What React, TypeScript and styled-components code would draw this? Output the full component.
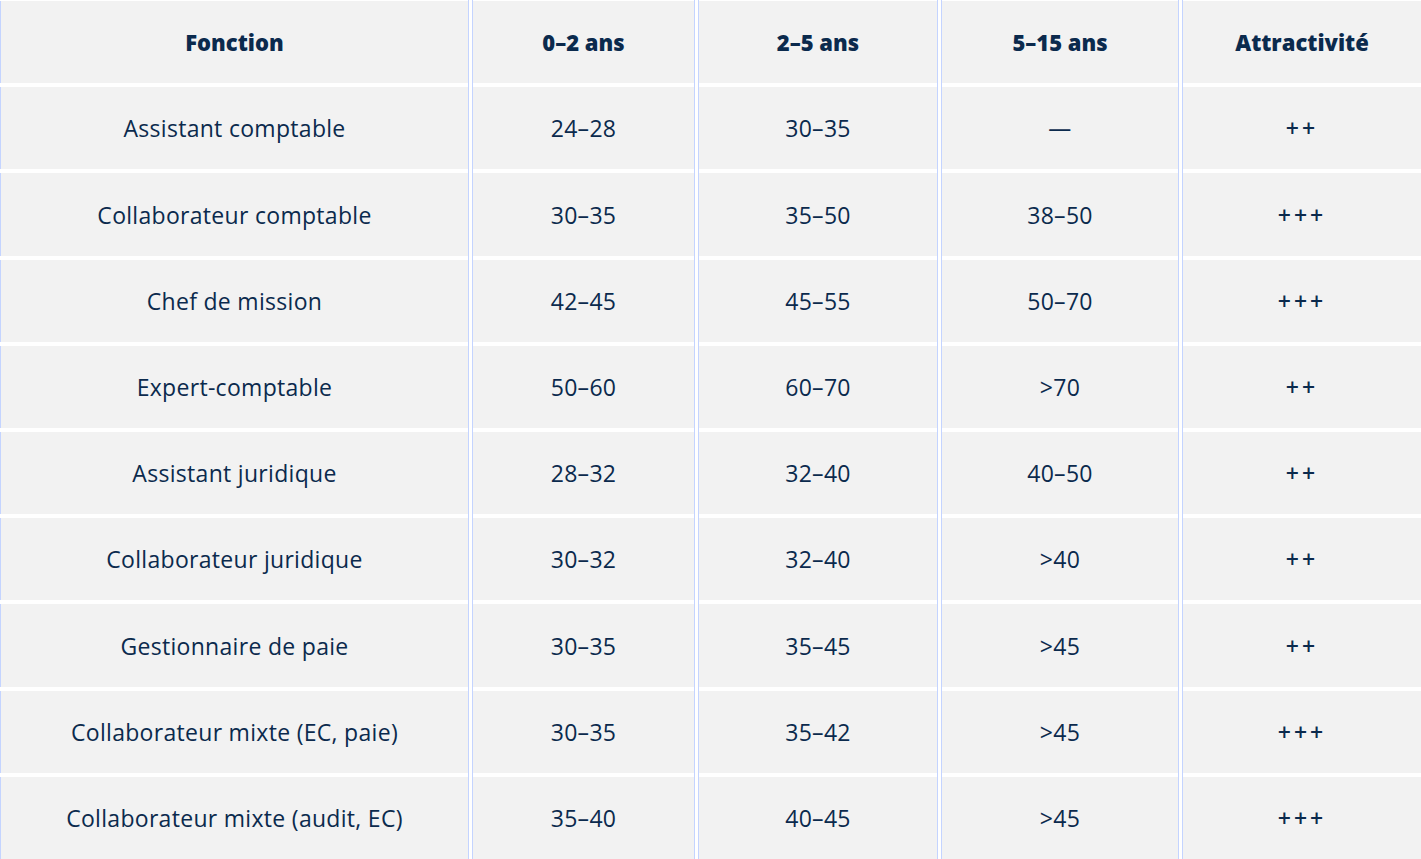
import styled, { createGlobalStyle } from "styled-components";

const GlobalStyle = createGlobalStyle`
  html, body {
    margin: 0;
    padding: 0;
    background: #ffffff;
  }
  body {
    font-family: "Open Sans", "Noto Sans", sans-serif;
    color: #0b2a4d;
  }
`;

type Col = { title: string; values: string[] };

const rows = [
  ["Assistant comptable", "24–28", "30–35", "—", "++"],
  ["Collaborateur comptable", "30–35", "35–50", "38–50", "+++"],
  ["Chef de mission", "42–45", "45–55", "50–70", "+++"],
  ["Expert-comptable", "50–60", "60–70", ">70", "++"],
  ["Assistant juridique", "28–32", "32–40", "40–50", "++"],
  ["Collaborateur juridique", "30–32", "32–40", ">40", "++"],
  ["Gestionnaire de paie", "30–35", "35–45", ">45", "++"],
  ["Collaborateur mixte (EC, paie)", "30–35", "35–42", ">45", "+++"],
  ["Collaborateur mixte (audit, EC)", "35–40", "40–45", ">45", "+++"],
];

const headers = ["Fonction", "0–2 ans", "2–5 ans", "5–15 ans", "Attractivité"];

const columns: Col[] = headers.map((title, i) => ({
  title,
  values: rows.map((r) => r[i]),
}));

const App = () => {
  return (
    <>
      <GlobalStyle />
      <Table>
        {columns.map((col, i) => (
          <Column key={col.title} $first={i === 0} $last={i === columns.length - 1}>
            <HeadCell $first={i === 0}>{col.title}</HeadCell>
            {col.values.map((v, j) => (
              <Cell key={j} $first={i === 0} $plus={i === 4}>
                {v}
              </Cell>
            ))}
          </Column>
        ))}
      </Table>
    </>
  );
};

export default App;

const Table = styled.div`
  display: grid;
  grid-template-columns: 469px 223px 240px 238px 1fr;
  column-gap: 3px;
  height: 859px;
  background: #ffffff;
`;

const Column = styled.div<{ $first?: boolean; $last?: boolean }>`
  display: flex;
  flex-direction: column;
  gap: 4px;
  padding-top: 1px;
  border-left: ${({ $first }) => ($first ? "none" : "1px solid #c4d4ff")};
  border-right: ${({ $last }) => ($last ? "none" : "1px solid #c4d4ff")};
`;

const Cell = styled.div<{ $first?: boolean; $plus?: boolean }>`
  flex: 1;
  display: flex;
  align-items: center;
  justify-content: center;
  background: #f2f2f2;
  border-left: ${({ $first }) => ($first ? "1px solid #c4d4ff" : "none")};
  font-size: 23px;
  font-weight: ${({ $plus }) => ($plus ? 600 : 400)};
  letter-spacing: ${({ $plus }) => ($plus ? "3px" : "0.3px")};
  color: #0b2a4d;
  white-space: nowrap;
`;

const HeadCell = styled(Cell)`
  font-size: 22px;
  font-weight: 800;
  letter-spacing: 0;
`;
